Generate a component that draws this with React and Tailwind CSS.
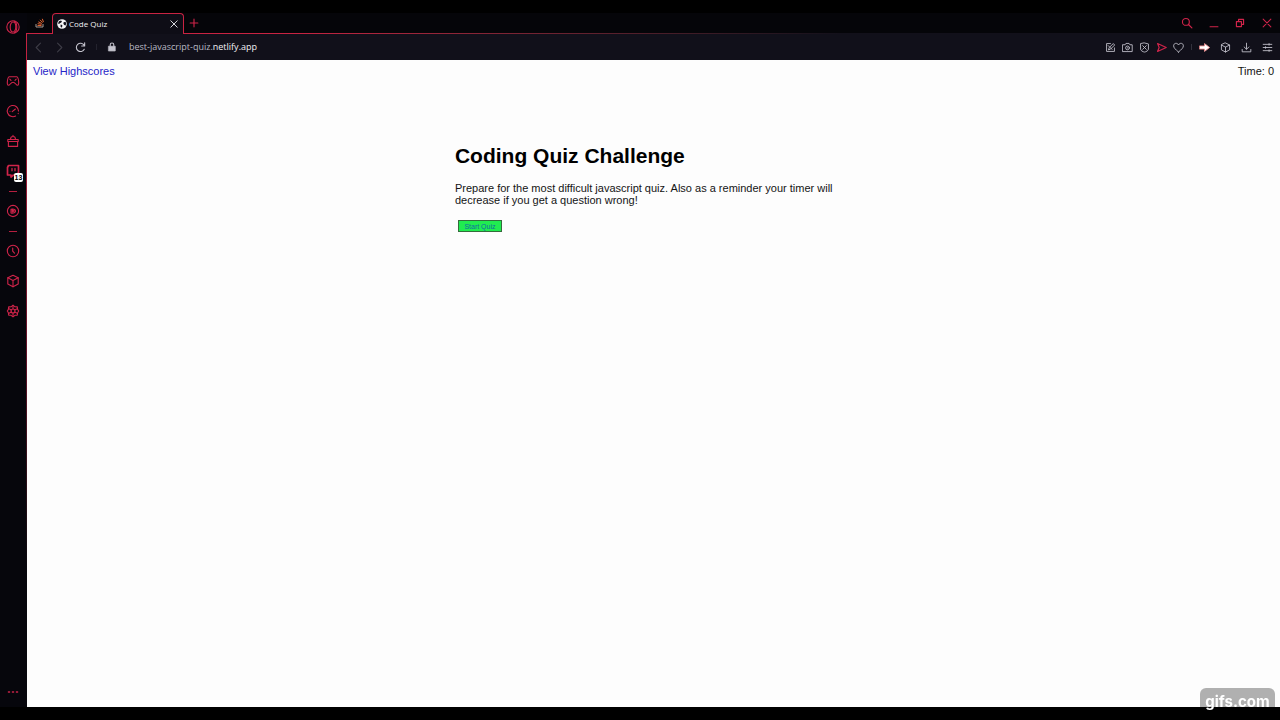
import React from 'react';

function Icon({ children, className = 'size-3.5' }) {
  return (
    <svg
      viewBox="0 0 14 14"
      fill="none"
      stroke="currentColor"
      strokeWidth="1.1"
      strokeLinecap="round"
      strokeLinejoin="round"
      className={className}
      aria-hidden="true"
    >
      {children}
    </svg>
  );
}

const cube = (
  <>
    <path d="M7 1.2 12.2 3.8v6.2L7 12.8 1.8 10V3.8z" />
    <path d="M1.8 3.8 7 6.6l5.2-2.8M7 6.6v6.2" />
  </>
);

const icons = {
  opera: (
    <>
      <circle cx="7" cy="7" r="6.2" />
      <ellipse cx="7" cy="7" rx="2.8" ry="5" />
      <path d="M8.5 1.2c3 1.6 3 10 0 11.6" />
    </>
  ),
  gamepad: (
    <>
      <path d="M3.4 2.8h7.2c1.1 0 1.7 1.6 2 4.2.3 2.8 0 4.3-1.1 4.3-1.5 0-2.2-3.1-4.5-3.1s-3 3.1-4.5 3.1c-1.1 0-1.4-1.5-1.1-4.3.3-2.6.9-4.2 2-4.2z" />
      <path d="M3.8 5.2 5 6.4M9 6.4l1.2-1.2" />
    </>
  ),
  gauge: (
    <>
      <path d="M9.6 12A5.6 5.6 0 1 1 12.5 7" />
      <path d="M6.2 7.6 9.4 5M12.2 9.4v.2M4 7.2v.1" />
    </>
  ),
  bag: (
    <>
      <path d="M1.8 5.5h10.4v2H1.8zM2.4 7.5h9.2V12.4H2.4z" />
      <path d="M4.5 5.3C4.5 3 5.4 2.5 7 2.5s2.5.5 2.5 2.8M7 2.3V1.2" />
    </>
  ),
  twitch: (
    <>
      <path d="M2.5 1.5h10v7L10 11H7.5L5 13v-2H1.5V3.5z" strokeWidth="1.7" />
      <path d="M6 4.5v2.3M9 4.5v2.3" strokeWidth="1.3" />
    </>
  ),
  player: (
    <>
      <circle cx="7" cy="7" r="5.6" />
      <path d="M5 9V5.2c1.8-.5 4.4 0 4.6 1.8.1 1.5-2.2 2.6-4.6 2zM6.3 6v2l2-1z" />
    </>
  ),
  clock: (
    <>
      <circle cx="7" cy="7" r="5.7" />
      <path d="M6.7 4v3.2l1.8 1.9" />
    </>
  ),
  cube,
  settings: (
    <>
      <path d="M7 1.1 8.9 2.8l2.4.1.3 2.5L12.7 7l-1.1 1.8-.3 2.4-2.4.1L7 12.9l-1.9-1.6-2.4-.1-.3-2.4L1.3 7l1.1-1.6.3-2.5 2.4-.1z" />
      <circle cx="7" cy="7" r="2" />
      <path d="M7 2v3M7 9v3M3 4.8l2.4 1.3M8.7 8l2.5 1.3M3 9.3l2.4-1.4M8.7 6l2.5-1.3" />
    </>
  ),
  dots: <path d="M2.5 7h1M6.5 7h1M10.5 7h1" strokeWidth="1.6" />,
};

function SideButton({ name, badge }) {
  return (
    <button
      type="button"
      aria-label={name}
      className="relative flex h-[30px] w-full shrink-0 items-center justify-center"
    >
      <Icon>{icons[name]}</Icon>
      {badge && (
        <span className="absolute right-[3px] bottom-1 flex h-[9px] w-[9px] items-center justify-center rounded-xs bg-white font-['Liberation_Sans',sans-serif] text-[7px] leading-none font-bold text-black">
          {badge}
        </span>
      )}
    </button>
  );
}

function Divider() {
  return (
    <div className="flex h-[10px] w-full shrink-0 items-center justify-center">
      <span className="h-px w-2 bg-[#b51f40]" />
    </div>
  );
}

function Sidebar() {
  return (
    <aside className="flex w-[27px] shrink-0">
      <nav aria-label="Sidebar" className="flex flex-1 flex-col text-[#d0244a]">
        <button type="button" aria-label="opera" className="mb-[25px] flex h-7 w-full items-center justify-center">
          <Icon>{icons.opera}</Icon>
        </button>
        <SideButton name="gamepad" />
        <SideButton name="gauge" />
        <SideButton name="bag" />
        <SideButton name="twitch" badge="13" />
        <Divider />
        <SideButton name="player" />
        <Divider />
        <SideButton name="clock" />
        <SideButton name="cube" />
        <SideButton name="settings" />
        <span className="flex-1" />
        <SideButton name="dots" />
      </nav>
      <span className="mt-5 w-px bg-linear-to-b from-[#c92342] via-[#5c1026] via-50% to-[#08070d] to-80%" />
    </aside>
  );
}

function TabBar() {
  return (
    <header className="flex h-[21px] shrink-0 bg-[#050509]">
      <button
        type="button"
        aria-label="Stack Overflow"
        className="flex w-[25px] items-center justify-center border-b border-[#c92342]"
      >
        <svg viewBox="0 0 10 10" fill="none" className="size-2.5" aria-hidden="true">
          <path d="M1 6v3h7V6" stroke="#a89b94" />
          <path d="M2.5 7.5h4M2.6 5.7l4 .6M3.3 3.8l3.6 1.7M5 1.8l2.6 2.8M7.3.8l1.2 3.3" stroke="#e0622f" />
        </svg>
      </button>
      <div className="flex w-[132px] items-center rounded-t border-x border-t border-[#c92342] bg-[#0e0d16] px-1">
        <svg viewBox="0 0 10 10" className="mr-0.5 size-2.5" aria-hidden="true">
          <circle cx="5" cy="5" r="4.8" fill="#f4f4f6" />
          <path d="M2 2.2 4 1.6l1 .8-1 1.4-1.4.5L2.4 5 1 4.4zM3.6 5.4l1.6.6.2 1.2-1 1.6-.9-1.4zM6.6 3.2l1.9-.4.7 1.8-.6 1.8-1.4-.4-.8-1.2z" fill="#11101a" />
        </svg>
        <span className="flex-1 font-['Open_Sans',sans-serif] text-[8px] font-medium text-[#f0f0f2]">
          Code Quiz
        </span>
        <button type="button" aria-label="Close tab" className="text-[#d6d6dc]">
          <Icon className="size-2.5">
            <path d="m2.5 2.5 9 9M11.5 2.5l-9 9" strokeWidth="1.4" />
          </Icon>
        </button>
      </div>
      <div className="flex min-w-0 flex-1 flex-col text-[#d0244a]">
        <div className="flex flex-1 items-center justify-between pr-[7px] pl-1">
          <button type="button" aria-label="New tab">
            <Icon className="size-3">
              <path d="M7 2.5v9M2.5 7h9" strokeWidth="1.3" />
            </Icon>
          </button>
          <div className="flex items-center">
            <button type="button" aria-label="Search" className="mr-4">
              <Icon className="size-3">
                <circle cx="5.7" cy="5.7" r="4" strokeWidth="1.3" />
                <path d="m8.7 8.7 4 4" strokeWidth="1.4" />
              </Icon>
            </button>
            <button type="button" aria-label="Minimize" className="mr-4">
              <Icon className="size-2.5">
                <path d="M1.5 12.2h11" strokeWidth="1.6" />
              </Icon>
            </button>
            <button type="button" aria-label="Restore" className="mr-4">
              <Icon className="size-2.5">
                <path d="M2 5h7v7H2zM5 5V2h7v7H9" strokeWidth="1.6" />
              </Icon>
            </button>
            <button type="button" aria-label="Close window">
              <Icon className="size-3">
                <path d="m2.5 2.5 9 9M11.5 2.5l-9 9" strokeWidth="1.2" />
              </Icon>
            </button>
          </div>
        </div>
        <span className="h-px bg-linear-to-r from-[#c92342] from-10% to-[#12101a] to-60%" />
      </div>
    </header>
  );
}

const tools = [
  ['Easy setup', <><path d="M7 2H2v10h10V7.5" /><path d="m4.5 9.5 1-2.5 5-5 1.8 1.8-5 5zM4 4.5l5 5" /></>],
  ['Snapshot', <><path d="M1 3.5h3l1-1.7h4l1 1.7h3v8.7H1z" /><circle cx="7" cy="7.5" r="2.4" /><path d="M7 7.3v.3" /></>],
  ['Tracker blocker', <><path d="M7 1.2 12 2.5v6.7c0 1.5-3 3.5-5 3.6-2-.1-5-2.1-5-3.6V2.5z" /><path d="m4.7 4.7 4.6 4.6M9.3 4.7 4.7 9.3" /></>],
  ['Flow', <path d="M2 2 13 7 2 12l2-5z" stroke="#d0244a" strokeWidth="1.5" />],
  ['Favourite', <path d="M7 12.8C3 9.3.8 7.4.8 4.8c0-3.4 4.4-4.4 6.2-1.1 1.8-3.3 6.2-2.3 6.2 1.1 0 2.6-2.2 4.5-6.2 8z" />],
];

const extensions = [
  ['Video tool', <path d="M1 5h6V2L13.5 7 7 12V9H1z" fill="#fff" stroke="#ef8d8d" />],
  ['Extensions', cube],
  ['Downloads', <path d="M7 1.5V9M4 6.3l3 3 3-3M1.5 9.5v3h11v-3" />],
  ['Menu', <path d="M1.5 3h11M1.5 7h11M1.5 11h11M9 2v2M4.5 6v2M9 10v2" />],
];

function ToolButton({ label, children }) {
  return (
    <button type="button" aria-label={label} className="flex items-center justify-center">
      <Icon className="size-[11px]">{children}</Icon>
    </button>
  );
}

function AddressBar() {
  return (
    <div className="flex h-[26px] shrink-0 items-center bg-[#11101a] pr-[7px] pl-1.5 text-[#c5c4ce]">
      <div className="flex items-center gap-2.5 text-[#3d3c46]">
        <ToolButton label="Back"><path d="M9.5 1.5 4 7l5.5 5.5" strokeWidth="1.4" /></ToolButton>
        <ToolButton label="Forward"><path d="M4.5 1.5 10 7l-5.5 5.5" strokeWidth="1.4" /></ToolButton>
        <span className="flex text-[#c5c4ce]">
          <ToolButton label="Reload">
            <path d="M11.8 9.2A5.3 5.3 0 1 1 11.5 4M12.3 1v4H8.5" strokeWidth="1.4" />
          </ToolButton>
        </span>
      </div>
      <span className="ml-2.5 h-1.5 w-px bg-[#24232e]" />
      <div className="ml-2.5 flex min-w-0 flex-1 items-center">
        <Icon className="size-2.5">
          <path d="M2.5 6h9v6.5h-9z" fill="currentColor" />
          <path d="M4.5 6V4a2.5 2.5 0 0 1 5 0v2" strokeWidth="1.5" />
        </Icon>
        <span className="ml-3 font-['Open_Sans',sans-serif] text-[9px] leading-4 text-[#b9b8c2]">
          best-javascript-quiz.<span className="font-medium text-[#f1f1f5]">netlify.app</span>
        </span>
      </div>
      <div className="flex items-center gap-1.5">
        {tools.map(([label, art]) => (
          <ToolButton key={label} label={label}>{art}</ToolButton>
        ))}
      </div>
      <span className="mx-[7px] h-1.5 w-px bg-[#33323d]" />
      <div className="flex items-center gap-2.5">
        {extensions.map(([label, art]) => (
          <ToolButton key={label} label={label}>{art}</ToolButton>
        ))}
      </div>
    </div>
  );
}

function QuizPage() {
  return (
    <main className="flex-1 bg-[#fdfdfd] px-1.5 pt-[5px] font-['Liberation_Sans',Arial,sans-serif] text-[11px] leading-3 text-[#141414]">
      <div className="flex justify-between">
        <a href="#highscores" className="text-[#2525c8]">View Highscores</a>
        <p>Time: 0</p>
      </div>
      <section className="mx-auto mt-[61px] w-[32%] min-w-[388px]">
        <h1 className="text-[21px] leading-9 font-bold text-black">Coding Quiz Challenge</h1>
        <p className="mt-2">
          Prepare for the most difficult javascript quiz. Also as a reminder your timer will decrease if you get a
          question wrong!
        </p>
        <button
          type="button"
          className="mt-3.5 ml-[3px] flex h-3 w-11 items-center justify-center border border-[#356c3c] bg-[#20ec50] text-[7px] leading-none text-[#126ea0]"
        >
          Start Quiz
        </button>
      </section>
    </main>
  );
}

export default function App() {
  return (
    <div className="flex min-h-screen flex-col bg-black py-[13px]">
      <div className="flex flex-1 bg-[#06060c]">
        <Sidebar />
        <div className="flex min-w-0 flex-1 flex-col">
          <TabBar />
          <AddressBar />
          <QuizPage />
        </div>
      </div>
      <div className="fixed right-[5px] bottom-0 flex h-8 w-[75px] justify-center overflow-hidden pt-1.5">
        <div className="absolute inset-x-0 top-0 h-[19px] rounded-t-md bg-[#b0b0b0]" />
        <span className="relative font-[Inter,sans-serif] text-[15px] leading-4 font-bold text-white">gifs.com</span>
      </div>
    </div>
  );
}
